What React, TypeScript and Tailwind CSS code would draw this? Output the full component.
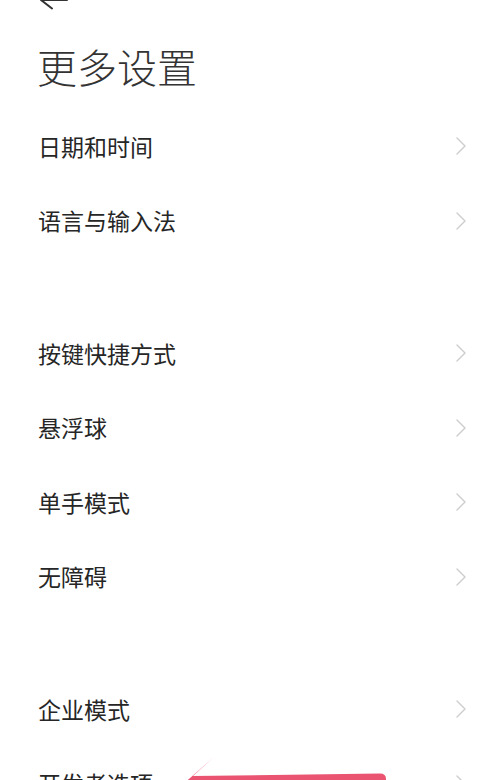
import React from "react";

const FONT = {
  fontFamily: '"Noto Sans CJK SC", "Noto Sans", sans-serif',
};

const GROUPS: string[][] = [
  ["日期和时间", "语言与输入法"],
  ["按键快捷方式", "悬浮球", "单手模式", "无障碍"],
  ["企业模式", "开发者选项"],
];

function Chevron() {
  return (
    <svg width="12" height="20" viewBox="0 0 12 20" fill="none" className="shrink-0">
      <path d="M2 2 L10 10 L2 18" stroke="#cdcdcd" strokeWidth="1.4" strokeLinecap="round" strokeLinejoin="round" />
    </svg>
  );
}

function Row({ label }: { label: string }) {
  return (
    <div className="flex h-[74.5px] items-center justify-between pl-[38px] pr-[33px]">
      <span className="text-[23px] leading-none text-[#262626]">{label}</span>
      <Chevron />
    </div>
  );
}

export default function App() {
  return (
    <div className="relative min-h-[780px] bg-white" style={FONT}>
      {/* back arrow, mostly scrolled off the top */}
      <svg width="34" height="10" viewBox="0 0 34 10" fill="none" className="ml-[38px] block">
        <path d="M3 0 H29 M3 0 L14 8.5" stroke="#333" strokeWidth="2" strokeLinecap="round" />
      </svg>

      <h1 className="mt-[36px] pl-[37px] text-[40px] font-light leading-[40px] text-[#333]">更多设置</h1>

      <div className="mt-[23px] flex flex-col gap-[58px]">
        {GROUPS.map((g, i) => (
          <div key={i} className="flex flex-col">
            {g.map((label) => (
              <Row key={label} label={label} />
            ))}
          </div>
        ))}
      </div>

      {/* red annotation arrow */}
      <svg
        width="500"
        height="40"
        viewBox="0 740 500 40"
        className="pointer-events-none absolute left-0 top-[740px]"
      >
        <path
          d="M214 757 L193 776 L380 773.5 Q386 773.5 386 779 L386 800 L165 800 Z"
          fill="#ea5471"
        />
      </svg>
    </div>
  );
}
